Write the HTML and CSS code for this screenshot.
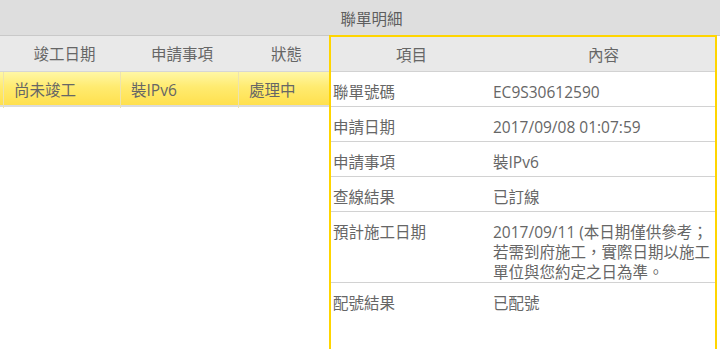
FILE: index.html
```html
<!DOCTYPE html>
<html lang="zh-Hant">
<head>
<meta charset="utf-8">
<title>聯單明細</title>
<link rel="stylesheet" href="styles.css">
</head>
<body>
	<div class="topbar">聯單明細</div>
	<div class="main">
		<div class="list">
			<div class="list-head">
				<span class="c0"></span>
				<span class="c1">竣工日期</span>
				<span class="c2">申請事項</span>
				<span class="c3">狀態</span>
			</div>
			<div class="list-row on">
				<span class="c0"></span>
				<span class="c1">尚未竣工</span>
				<span class="c2">裝IPv6</span>
				<span class="c3">處理中</span>
			</div>
		</div>
		<div class="detail">
			<div class="detail-head">
				<span>項目</span>
				<span>內容</span>
			</div>
			<div class="detail-row">
				<span class="k">聯單號碼</span>
				<span class="v">EC9S30612590</span>
			</div>
			<div class="detail-row">
				<span class="k">申請日期</span>
				<span class="v">2017/09/08 01:07:59</span>
			</div>
			<div class="detail-row">
				<span class="k">申請事項</span>
				<span class="v">裝IPv6</span>
			</div>
			<div class="detail-row">
				<span class="k">查線結果</span>
				<span class="v">已訂線</span>
			</div>
			<div class="detail-row">
				<span class="k">預計施工日期</span>
				<span class="v">2017/09/11 (本日期僅供參考；若需到府施工，實際日期以施工單位與您約定之日為準。</span>
			</div>
			<div class="detail-row last">
				<span class="k">配號結果</span>
				<span class="v">已配號</span>
			</div>
		</div>
	</div>
</body>
</html>
```

FILE: styles.css
```css
html,body{ margin:0; padding:0; background:#fff; }
body{ font-family:"Open Sans","Noto Sans CJK TC",sans-serif; font-size:15.5px; color:#666; overflow:hidden; }
.topbar{ height:35px; line-height:38px; background:#dedede; border-bottom:1px solid #c9c9c9; text-align:center; padding-left:23px; color:#5e5e5e; }
.main{ display:flex; height:313px; }

.list{ width:329px; }
.list-head,.list-row{ display:grid; grid-template-columns:3px 117px 118px 91px; }
.list-head{ height:35px; line-height:36px; background:#e9e9e9; border-bottom:1px solid #d6d6d6; }
.list-head span{ text-align:center; padding-left:6px; }
.list-head .c0{ padding:0; }
.list-row{ height:33px; line-height:36px; border-bottom:2px solid #dcdcdc; }
.list-row span{ padding-left:10px; border-left:1px solid #ece3b0; }
.list-row .c0{ padding:0; border:none; }
.list-row.on{ background:linear-gradient(#fff7a6,#ffeb70 45%,#ffe04e); }

.detail{ width:384px; margin-top:-1px; border:2px solid #ffd500; border-bottom:none; }
.detail-head{ display:grid; grid-template-columns:161px 223px; height:34px; line-height:36px; background:#e9e9e9; border-bottom:1px solid #d2d2d2; }
.detail-head span{ text-align:center; }
.detail-row{ display:grid; grid-template-columns:160px 222px; min-height:35px; box-sizing:border-box; padding:10px 0 0 2px; line-height:20px; border-bottom:1px solid #d2d2d2; }
.detail-row.last{ border-bottom:none; }
.detail-row .v{ padding-right:4px; }
```
